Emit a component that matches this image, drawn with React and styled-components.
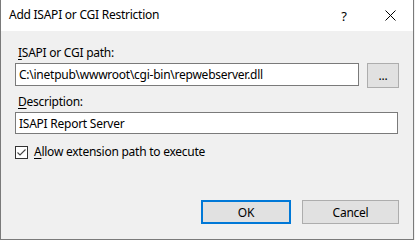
import styled, {createGlobalStyle} from 'styled-components'

const GlobalStyle = createGlobalStyle`
  html, body {
    margin: 0;
    padding: 0;
    background: #f0f0f0;
  }
  body {
    font-family: "Noto Sans", "Liberation Sans", sans-serif;
    font-size: 12px;
    letter-spacing: -0.25px;
    color: #000;
  }
`

const Window = styled.div`
  box-sizing: border-box;
  width: 414px;
  height: 240px;
  display: flex;
  flex-direction: column;
  background: #f0f0f0;
  border: 1px solid #7a7a7a;
  border-top: none;
`

const TitleBar = styled.div`
  height: 31px;
  flex: none;
  display: flex;
  align-items: center;
  background: #fff;
  padding-left: 8px;
`

const Title = styled.div`
  flex: 1;
  font-size: 12px;
  line-height: 16px;
  padding-bottom: 1px;
`

const TitleButton = styled.div`
  width: 46px;
  height: 31px;
  display: flex;
  align-items: center;
  justify-content: center;
  font-size: 13px;
`

const Body = styled.div`
  flex: 1;
  display: flex;
  flex-direction: column;
  padding: 14px 14px 0 14px;
`

const Label = styled.label`
  display: block;
  margin: ${p => (p.$inline ? '0' : '0 0 2px 3px')};
  line-height: 16px;
  height: 16px;

  & u {
    text-decoration-thickness: 1px;
    text-underline-offset: 2px;
  }
`

const Row = styled.div`
  display: flex;
  align-items: flex-start;
  gap: 8px;
  margin-bottom: ${p => p.$mb || 0}px;
`

const TextBox = styled.div`
  box-sizing: border-box;
  width: ${p => p.$w}px;
  height: ${p => p.$h || 23}px;
  background: #fff;
  border: 1px solid #7a7a7a;
  padding: 0 3px;
  display: flex;
  align-items: center;
  white-space: nowrap;
  overflow: hidden;
`

const Button = styled.div`
  box-sizing: border-box;
  width: ${p => p.$w}px;
  height: ${p => p.$h || 24}px;
  background: #e1e1e1;
  border: ${p => (p.$default ? '2px solid #0078d7' : '1px solid #adadad')};
  display: flex;
  align-items: center;
  justify-content: center;
`

const CheckRow = styled.div`
  display: flex;
  align-items: center;
  gap: 6px;
  margin-top: 10px;
`

const CheckBox = styled.div`
  box-sizing: border-box;
  width: 13px;
  height: 13px;
  border: 1px solid #333;
  background: #fff;
  display: flex;
  align-items: center;
  justify-content: center;
`

const Footer = styled.div`
  display: flex;
  justify-content: flex-end;
  gap: 11px;
  margin-top: auto;
  margin-bottom: 15px;
`

export default function App () {
  return (
    <>
      <GlobalStyle/>
      <Window>
        <TitleBar>
          <Title>Add ISAPI or CGI Restriction</Title>
          <TitleButton>?</TitleButton>
          <TitleButton>
            <svg width='11' height='11' viewBox='0 0 11 11'>
              <path d='M0.5 0.5 L10.5 10.5 M10.5 0.5 L0.5 10.5' stroke='#000' strokeWidth='1' fill='none'/>
            </svg>
          </TitleButton>
        </TitleBar>
        <Body>
          <Label><u>I</u>SAPI or CGI path:</Label>
          <Row $mb={6}>
            <TextBox $w={344}>C:\inetpub\wwwroot\cgi-bin\repwebserver.dll</TextBox>
            <Button $w={32} $h={25}>...</Button>
          </Row>
          <Label><u>D</u>escription:</Label>
          <Row>
            <TextBox $w={383} $h={22}>ISAPI Report Server</TextBox>
          </Row>
          <CheckRow>
            <CheckBox>
              <svg width='11' height='11' viewBox='0 0 11 11'>
                <path d='M1.5 5.5 L4 8 L9.5 2.5' stroke='#444' strokeWidth='1.1' fill='none'/>
              </svg>
            </CheckBox>
            <Label as='span' $inline><u>A</u>llow extension path to execute</Label>
          </CheckRow>
          <Footer>
            <Button $w={90} $default>OK</Button>
            <Button $w={97}>Cancel</Button>
          </Footer>
        </Body>
      </Window>
    </>
  )
}
